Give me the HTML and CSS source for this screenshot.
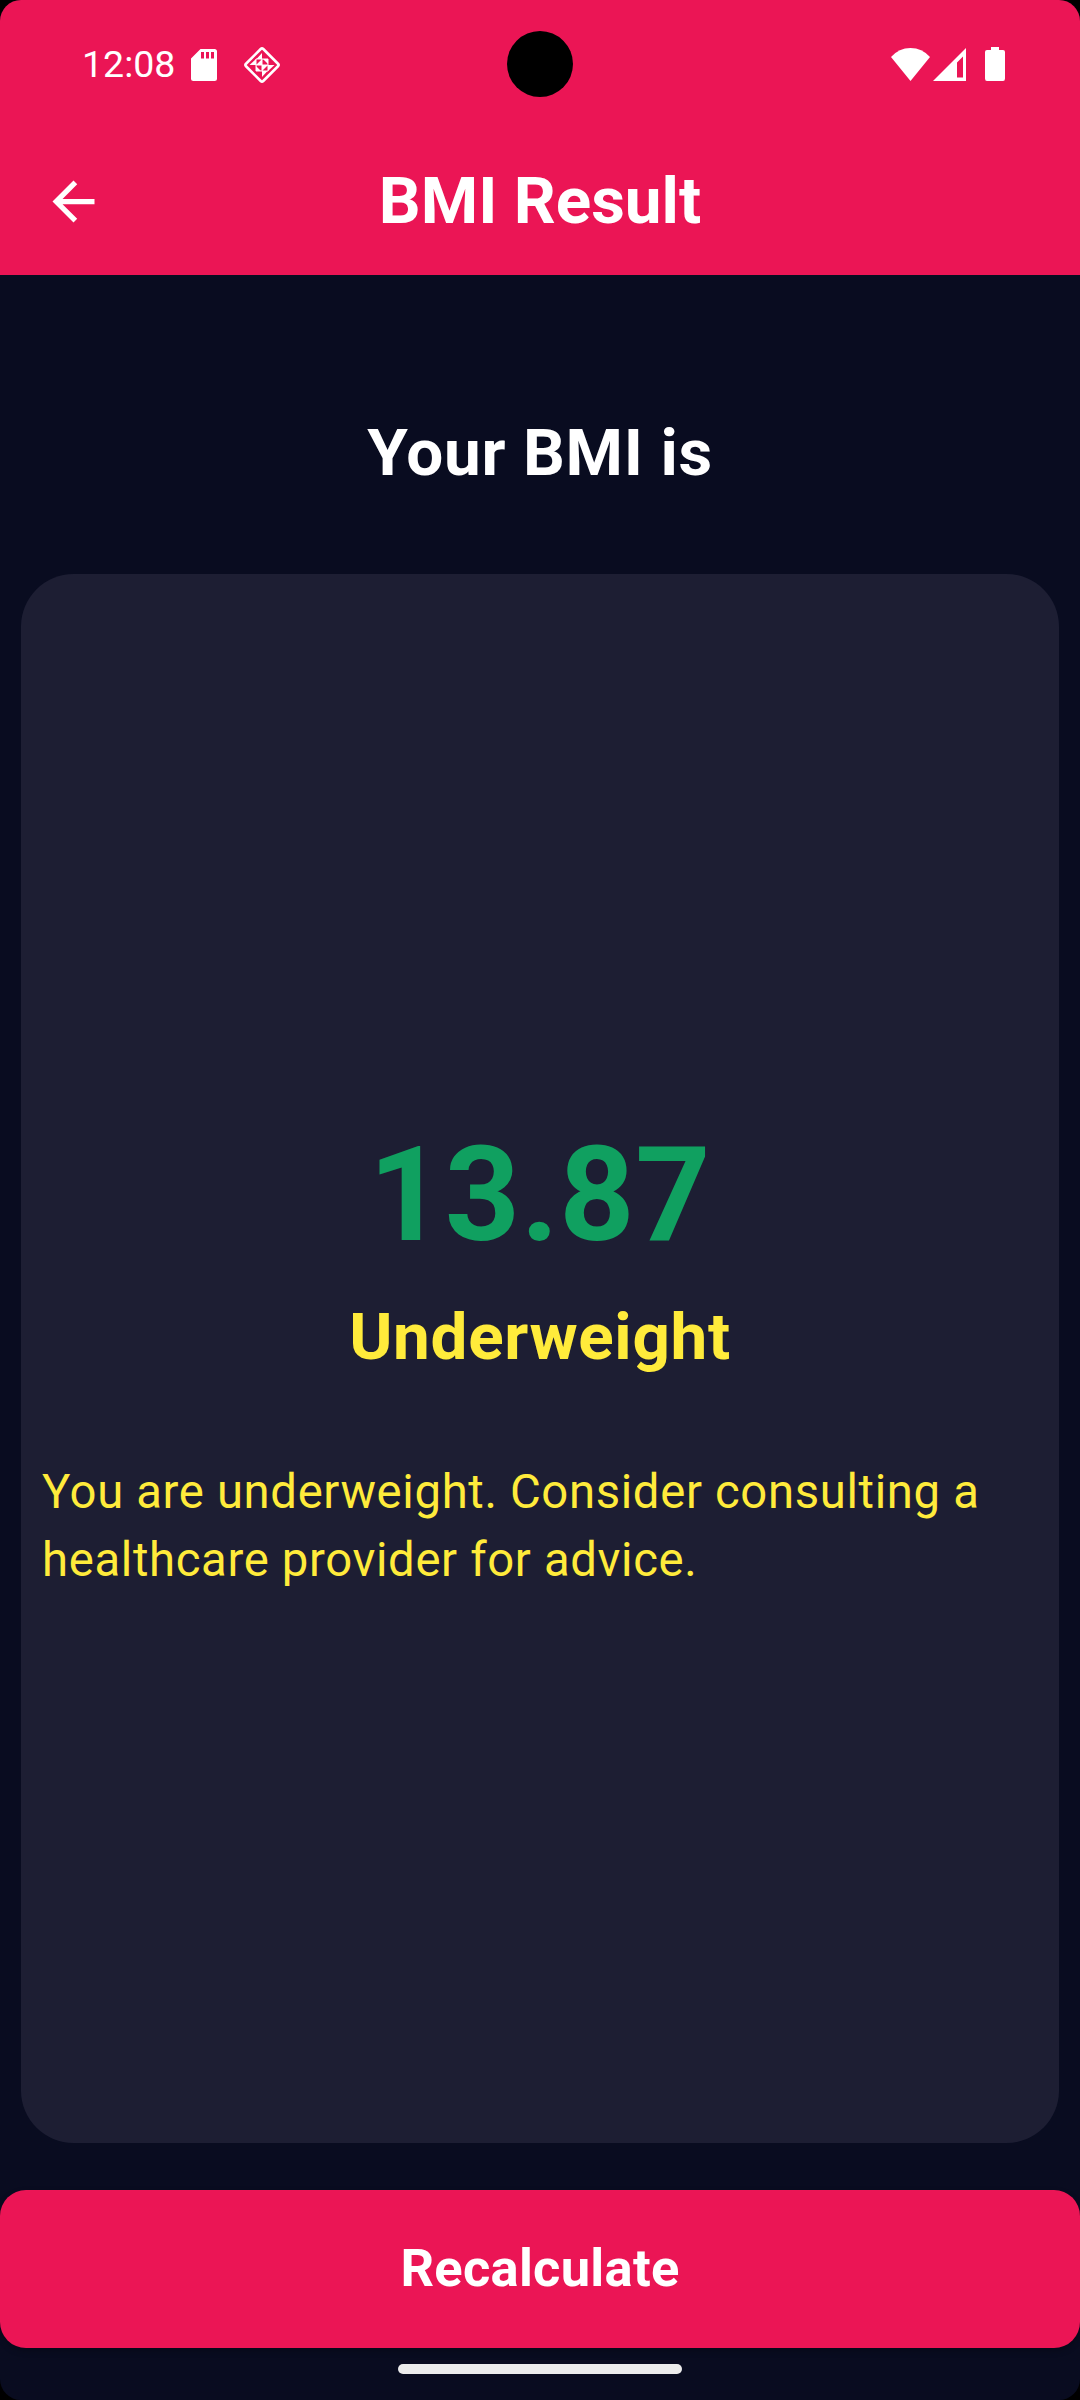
FILE: index.html
```html
<!DOCTYPE html>
<html lang="en">
<head>
<meta charset="utf-8">
<title>BMI Result</title>
<link rel="stylesheet" href="styles.css">
</head>
<body>
<div class="screen">
  <header class="app-bar">
    <div class="status-bar">
      <div class="status-left">
        <span class="clock">12:08</span>
        <svg class="sd" width="26" height="32" viewBox="0 0 26 32"><path fill="#fff" fill-rule="evenodd" d="M9.500 0H23.500Q26 0 26 2.500V29.500Q26 32 23.500 32H2.500Q0 32 0 29.500V9.500ZM10 3V9.500H13V3ZM15 3V9.500H18V3ZM20 3V9.500H23V3Z"/></svg>
        <svg class="diamond" width="38" height="38" viewBox="-19 -19 38 38"><rect x="-12.200" y="-12.200" width="24.400" height="24.400" rx="1.800" transform="rotate(45)" fill="none" stroke="#fff" stroke-width="2.600"/><g fill="#fff"><path d="M0-12V-6H-5.500ZM-12.500 0L-6-6V0ZM12.500 0L6 6V0ZM0 12V6H5.500Z"/><path d="M0 0V-6L-6 0ZM0 0V6L6 0ZM1-6H6V-1ZM-1 6H-6V1Z"/></g><path d="M-6 0V-6H6V6H-6V0M0-6V6M-6 0H6" fill="none" stroke="#fff" stroke-width="1"/></svg>
      </div>
      <span class="camera"></span>
      <div class="status-right">
        <svg width="39" height="33" viewBox="0 0 39 33"><path fill="#fff" d="M0 9Q8 0 19.500 0T39 9L19.500 33Z"/></svg>
        <svg class="signal" width="33" height="33" viewBox="0 0 33 33"><path fill="#fff" fill-rule="evenodd" d="M33 0V33H0ZM30 8.500L24 14.500V29.500H30Z"/></svg>
        <svg class="battery" width="20" height="34" viewBox="0 0 20 34"><path fill="#fff" d="M6 0H14V3H18Q20 3 20 5V31.500Q20 34 18 34H2Q0 34 0 31.500V5Q0 3 2 3H6Z"/></svg>
      </div>
    </div>
    <div class="toolbar">
      <svg class="back" width="63" height="63" viewBox="0 0 24 24"><path fill="#fff" d="M20 11H7.830l5.590-5.590L12 4l-8 8 8 8 1.410-1.410L7.830 13H20z"/></svg>
      <h1 class="title">BMI Result</h1>
    </div>
  </header>
  <main class="content">
    <h2 class="heading">Your BMI is</h2>
    <section class="card">
      <div class="value">13.87</div>
      <div class="label">Underweight</div>
      <p class="advice">You are underweight. Consider consulting a healthcare provider for advice.</p>
    </section>
  </main>
  <button class="action">Recalculate</button>
  <footer class="nav"><span class="pill"></span></footer>
</div>
</body>
</html>
```
FILE: styles.css
```css
* { box-sizing: border-box; margin: 0; padding: 0; }
body { background: #000; font-family: Roboto, sans-serif; color: #fff; }
svg { display: block; flex: none; }
.screen { width: 1080px; height: 2400px; display: flex; flex-direction: column; background: #090c20; border-radius: 21px; overflow: hidden; }
.app-bar { height: 275px; background: #eb1555; }
.status-bar { height: 128px; display: grid; grid-template-columns: 1fr 66px 1fr; align-items: center; }
.status-left, .status-right { display: flex; align-items: center; }
.status-left { padding: 2px 0 0 82px; }
.clock { padding-bottom: 2px; font-size: 37.5px; line-height: 44px; width: 109px; }
.diamond { margin-left: 26px; }
.camera { width: 66px; height: 66px; border-radius: 50%; background: #000; }
.status-right { justify-content: flex-end; padding-right: 75px; }
.signal { margin-left: 3px; }
.battery { margin-left: 19px; }
.toolbar { height: 147px; display: grid; grid-template-columns: 63px 1fr 63px; align-items: center; padding: 0 42px; }
.title { padding-bottom: 2px; font-size: 65.625px; line-height: 77px; font-weight: 700; text-align: center; }
.content { flex: 1; display: flex; flex-direction: column; padding: 0 21px; }
.heading { height: 299px; padding-top: 131px; font-size: 65.625px; line-height: 94px; letter-spacing: 0.656px; text-align: center; }
.card { height: 1569px; border-radius: 52.5px; background: #1d1e33; padding: 0 21px; display: flex; flex-direction: column; align-items: center; justify-content: center; }
.value { font-size: 131.25px; line-height: 187px; font-weight: 700; letter-spacing: 0.656px; color: #10a060; }
.label { padding-top: 1px; font-size: 65.625px; line-height: 94px; font-weight: 700; letter-spacing: 0.656px; color: #ffeb3b; }
.advice { align-self: stretch; margin-top: 74px; padding-bottom: 21px; box-sizing: content-box; font-size: 47.25px; line-height: 68px; letter-spacing: 0.656px; color: #ffeb3b; }
.action { height: 158px; padding-bottom: 1px; border: 0; border-radius: 26px; background: #eb1555; color: #fff; font: 700 52.5px/75px Roboto, sans-serif; letter-spacing: 0.2625px; box-shadow: 0 3px 6px rgba(0, 0, 0, 0.25); }
.nav { height: 52px; display: flex; justify-content: center; padding-top: 16px; }
.pill { width: 284px; height: 10px; border-radius: 5px; background: #ececec; }
```
